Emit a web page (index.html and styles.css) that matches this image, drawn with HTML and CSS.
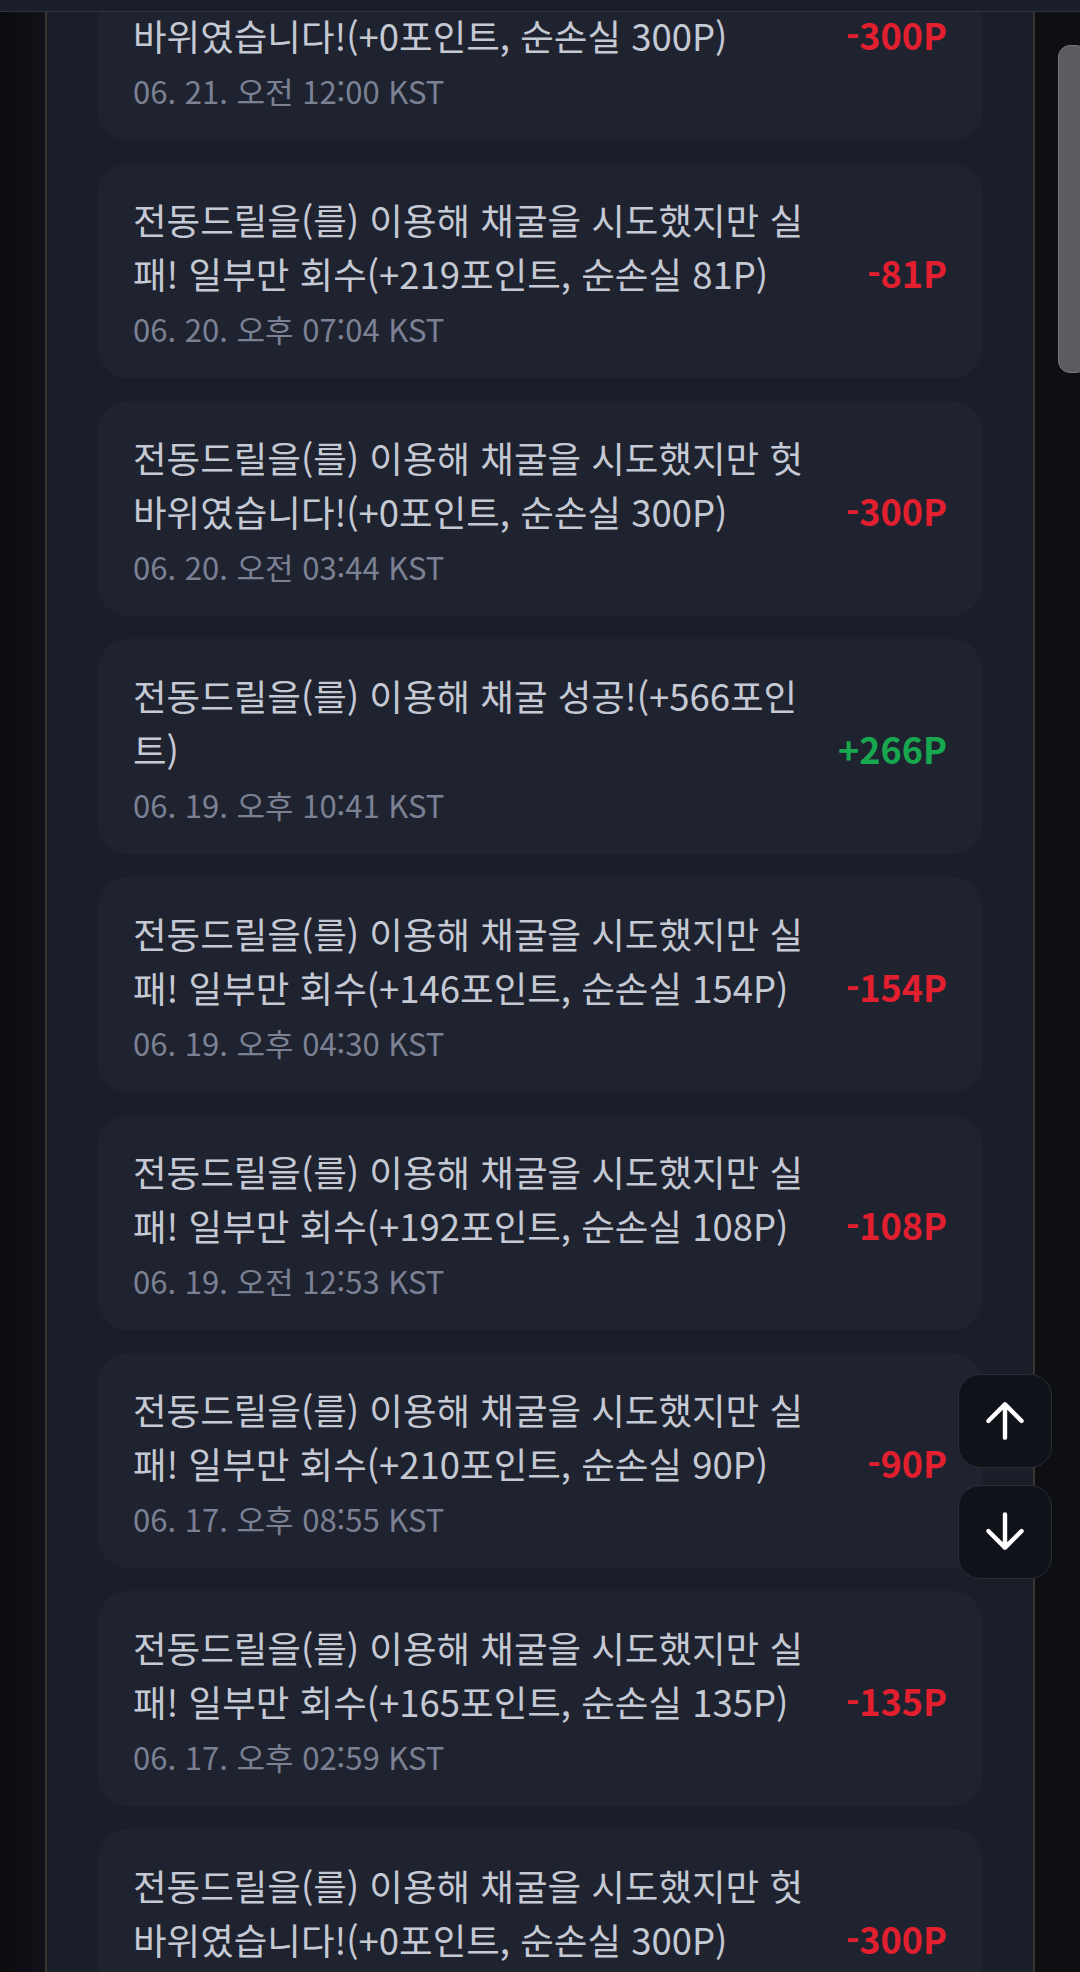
FILE: index.html
```html
<!DOCTYPE html>
<html lang="ko">
<head>
<meta charset="utf-8">
<title>채굴 기록</title>
<link rel="stylesheet" href="styles.css">
</head>
<body>
<div class="topbar"></div>
<div class="layout">
  <div class="gutter gutter-left"></div>
  <main class="panel">
    <ul class="list">
      <li class="card">
        <div class="info">
          <p class="msg">전동드릴을(를) 이용해 채굴을 시도했지만 헛바위였습니다!(+0포인트, 순손실 300P)</p>
          <p class="date">06. 21. 오전 12:00 KST</p>
        </div>
        <span class="amount minus">-300P</span>
      </li>
      <li class="card">
        <div class="info">
          <p class="msg">전동드릴을(를) 이용해 채굴을 시도했지만 실패! 일부만 회수(+219포인트, 순손실 81P)</p>
          <p class="date">06. 20. 오후 07:04 KST</p>
        </div>
        <span class="amount minus">-81P</span>
      </li>
      <li class="card">
        <div class="info">
          <p class="msg">전동드릴을(를) 이용해 채굴을 시도했지만 헛바위였습니다!(+0포인트, 순손실 300P)</p>
          <p class="date">06. 20. 오전 03:44 KST</p>
        </div>
        <span class="amount minus">-300P</span>
      </li>
      <li class="card">
        <div class="info">
          <p class="msg">전동드릴을(를) 이용해 채굴 성공!(+566포인트)</p>
          <p class="date">06. 19. 오후 10:41 KST</p>
        </div>
        <span class="amount plus">+266P</span>
      </li>
      <li class="card">
        <div class="info">
          <p class="msg">전동드릴을(를) 이용해 채굴을 시도했지만 실패! 일부만 회수(+146포인트, 순손실 154P)</p>
          <p class="date">06. 19. 오후 04:30 KST</p>
        </div>
        <span class="amount minus">-154P</span>
      </li>
      <li class="card">
        <div class="info">
          <p class="msg">전동드릴을(를) 이용해 채굴을 시도했지만 실패! 일부만 회수(+192포인트, 순손실 108P)</p>
          <p class="date">06. 19. 오전 12:53 KST</p>
        </div>
        <span class="amount minus">-108P</span>
      </li>
      <li class="card">
        <div class="info">
          <p class="msg">전동드릴을(를) 이용해 채굴을 시도했지만 실패! 일부만 회수(+210포인트, 순손실 90P)</p>
          <p class="date">06. 17. 오후 08:55 KST</p>
        </div>
        <span class="amount minus">-90P</span>
      </li>
      <li class="card">
        <div class="info">
          <p class="msg">전동드릴을(를) 이용해 채굴을 시도했지만 실패! 일부만 회수(+165포인트, 순손실 135P)</p>
          <p class="date">06. 17. 오후 02:59 KST</p>
        </div>
        <span class="amount minus">-135P</span>
      </li>
      <li class="card">
        <div class="info">
          <p class="msg">전동드릴을(를) 이용해 채굴을 시도했지만 헛바위였습니다!(+0포인트, 순손실 300P)</p>
          <p class="date">06. 17. 오전 09:20 KST</p>
        </div>
        <span class="amount minus">-300P</span>
      </li>
    </ul>
  </main>
  <div class="gutter gutter-right">
    <div class="thumb"></div>
  </div>
</div>
<div class="scroll-buttons">
  <button class="scroll-btn" type="button" aria-label="맨 위로">
    <svg viewBox="0 0 94 94" width="94" height="94"><path d="M47 64 V30 M30 47 L47 30 L64 47" fill="none" stroke="#ffffff" stroke-width="4.5" stroke-linecap="round" stroke-linejoin="round"/></svg>
  </button>
  <button class="scroll-btn" type="button" aria-label="맨 아래로">
    <svg viewBox="0 0 94 94" width="94" height="94"><path d="M47 29 V63 M30 46 L47 63 L64 46" fill="none" stroke="#ffffff" stroke-width="4.5" stroke-linecap="round" stroke-linejoin="round"/></svg>
  </button>
</div>
</body>
</html>
```

FILE: styles.css
```css
* { box-sizing: border-box; }

html, body {
  margin: 0;
  padding: 0;
  height: 1972px;
  overflow: hidden;
  background: #0d0f13;
  font-family: "Noto Sans CJK KR", "Noto Sans", sans-serif;
}

.topbar {
  position: fixed;
  top: 0;
  left: 0;
  right: 0;
  height: 12px;
  background: #1b1f29;
  border-bottom: 1px solid #2c313b;
  z-index: 5;
}

.layout {
  display: flex;
  height: 1972px;
}

.gutter {
  flex: 0 0 45px;
  background: #0d0f13;
  position: relative;
}

.gutter-left {
  background: linear-gradient(90deg, #0b0c10, #101218);
}

.panel {
  flex: 1;
  background: #1a1e28;
  border-left: 2px solid #3b342c;
  border-right: 2px solid #3b342c;
  padding: 0 51px;
  overflow: hidden;
}

.list {
  list-style: none;
  margin: -75px 0 0;
  padding: 0;
  display: flex;
  flex-direction: column;
  gap: 23px;
}

.card {
  display: flex;
  align-items: center;
  min-height: 215px;
  padding: 30px 35px 27px 35px;
  background: #1f2330;
  border-radius: 30px;
}

.info {
  flex: 1;
  min-width: 0;
}

.msg {
  margin: 0;
  font-size: 36.5px;
  line-height: 54px;
  color: #c5c9d4;
}

.date {
  margin: 6px 0 0;
  font-size: 31px;
  line-height: 44px;
  color: #7b8193;
}

.amount {
  flex: 0 0 auto;
  min-width: 110px;
  margin-left: 20px;
  text-align: right;
  font-size: 36px;
  font-weight: 700;
  line-height: 1;
}

.minus { color: #e11f2f; }
.plus { color: #17a84f; }

.thumb {
  position: absolute;
  top: 45px;
  left: 23px;
  width: 30px;
  height: 328px;
  border-radius: 12px;
  background: #5a5c61;
  border: 1px solid #75777c;
}

.scroll-buttons {
  position: fixed;
  top: 1374px;
  right: 28px;
  display: flex;
  flex-direction: column;
  gap: 17px;
  z-index: 6;
}

.scroll-btn {
  width: 94px;
  height: 94px;
  padding: 0;
  border: 1px solid #2b2e36;
  border-radius: 22px;
  background: #0f1218;
  display: flex;
  align-items: center;
  justify-content: center;
}

.scroll-btn svg {
  display: block;
  width: 94px;
  height: 94px;
}
```
